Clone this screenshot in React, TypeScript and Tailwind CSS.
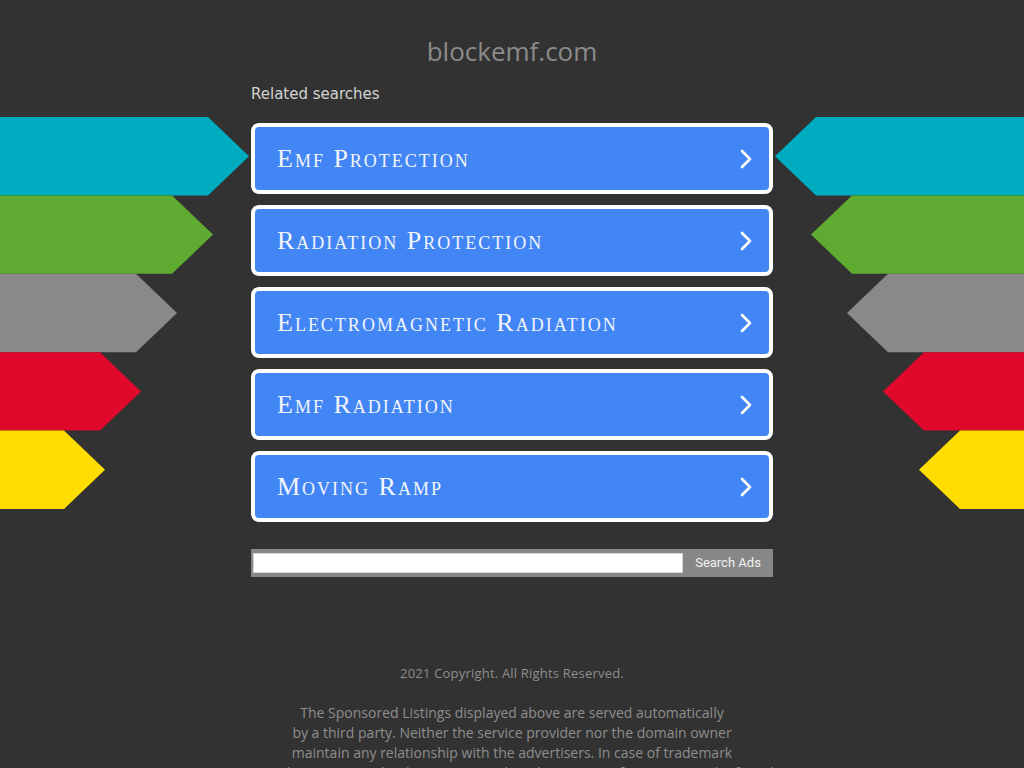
import React from 'react';

const links = ['Emf Protection', 'Radiation Protection', 'Electromagnetic Radiation', 'Emf Radiation', 'Moving Ramp'];

// side ribbons: [colour, body length], each ends in a 41px point
const ribbons: [string, number][] = [
  ['#00acbf', 208],
  ['#5fab31', 172],
  ['#898989', 136],
  ['#e0092b', 100],
  ['#ffdd00', 64],
];

const Ribbons: React.FC<{ flip?: boolean }> = ({ flip }) => (
  <svg width="251" height="392" viewBox="0 0 251 392" className={flip ? '-scale-x-100' : ''}>
    {ribbons.map(([c, w], i) => {
      const y0 = i * 78.4;
      const y1 = y0 + 78.4;
      return (
        <polygon
          key={c}
          fill={c}
          points={`0,${y0} ${w},${y0} ${w + 41},${(y0 + y1) / 2} ${w},${y1} 0,${y1}`}
        />
      );
    })}
  </svg>
);

const LinkButton: React.FC<{ label: string }> = ({ label }) => (
  <a
    href="#"
    className="flex h-[71px] items-center justify-between rounded-[8px] border-[4px] border-white bg-[#4285f4] pl-[22px] pr-[16px] text-[#f2f5fb]"
  >
    <span className="text-[26px] tracking-[2px] [font-variant:small-caps] [font-family:'Liberation_Serif',serif]">{label}</span>
    <svg width="14" height="22" viewBox="0 0 14 22" fill="none" stroke="white" strokeWidth="2.6" strokeLinecap="round" strokeLinejoin="round">
      <path d="M3 3l8 8-8 8" />
    </svg>
  </a>
);

export default function App() {
  return (
    <div className="min-h-screen overflow-hidden bg-[#323232]">
      <h1 className="pt-[34px] text-center text-[26px] leading-[34px] text-[#8b8b8b] [font-family:'Open_Sans',sans-serif]">
        blockemf.com
      </h1>
      <div className="mx-auto mt-[15px] w-[522px] text-[15px] leading-[22px] text-[#d2d2d2] [font-family:'DejaVu_Sans',sans-serif]">
        Related searches
      </div>

      <div className="mt-[12px] flex">
        <div className="flex-1">
          <Ribbons />
        </div>
        <div className="flex w-[522px] flex-col gap-[11px] pt-[6px]">
          {links.map((l) => (
            <LinkButton key={l} label={l} />
          ))}
        </div>
        <div className="flex flex-1 justify-end">
          <Ribbons flip />
        </div>
      </div>

      <div className="mx-auto mt-[27px] flex h-[28px] w-[522px] items-center bg-[#878787] pl-[2px]">
        <input className="h-[20px] w-[430px] border border-[#d8d8d8] bg-white" />
        <button className="flex-1 text-center text-[13px] text-[#f2f2f2] [font-family:Roboto,sans-serif]">Search Ads</button>
      </div>

      <div className="mt-[86px] text-center text-[#8e8e8e] [font-family:'Open_Sans',sans-serif]">
        <p className="text-[13px] leading-[20px] tracking-[0.2px]">2021 Copyright. All Rights Reserved.</p>
        <p className="mx-auto mt-[20px] w-[560px] text-[14px] leading-[20px]">
          The Sponsored Listings displayed above are served automatically
          <br />
          by a third party. Neither the service provider nor the domain owner
          <br />
          maintain any relationship with the advertisers. In case of trademark
          <br />
          issues please contact the domain owner directly (contact information can be found in whois).
        </p>
      </div>
    </div>
  );
}
